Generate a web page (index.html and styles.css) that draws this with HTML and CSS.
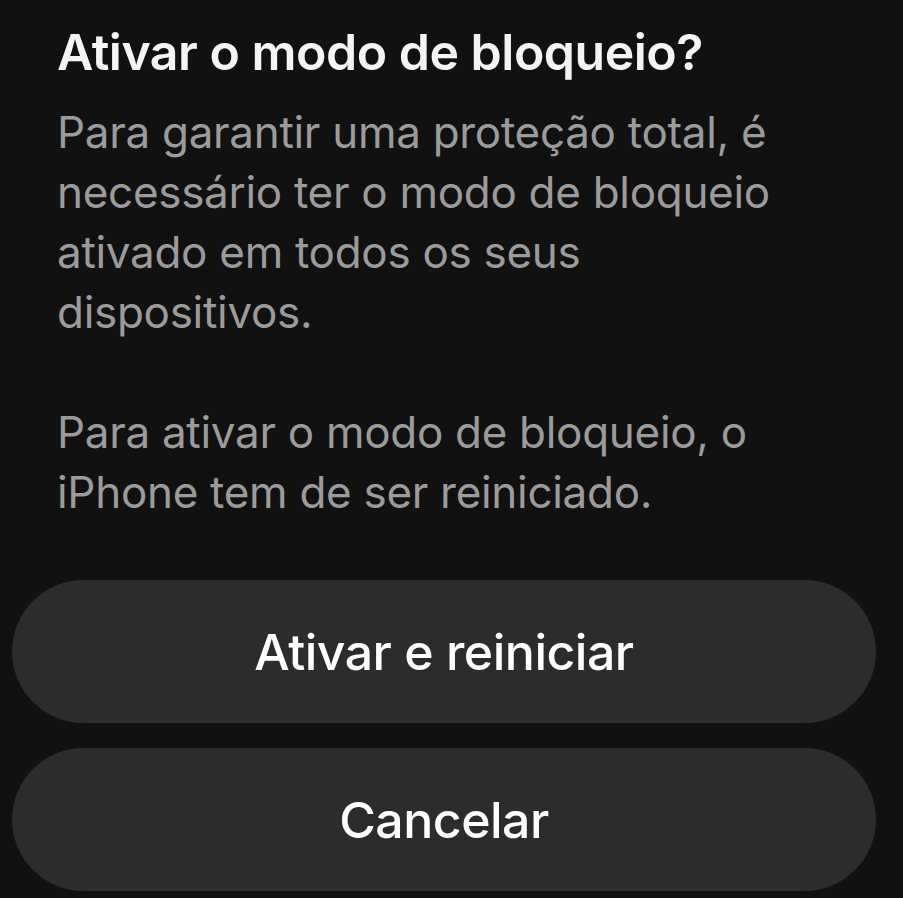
FILE: index.html
```html
<!DOCTYPE html>
<html lang="pt">
<head>
  <meta charset="UTF-8">
  <title>Modo de bloqueio</title>
  <link rel="stylesheet" href="styles.css">
</head>
<body>
  <div class="sheet">
    <div class="text">
      <h1>Ativar o modo de bloqueio?</h1>
      <p>Para garantir uma proteção total, é necessário ter o modo de bloqueio ativado em todos os seus dispositivos.</p>
      <p>Para ativar o modo de bloqueio, o iPhone tem de ser reiniciado.</p>
    </div>
    <div class="actions">
      <button class="btn">Ativar e reiniciar</button>
      <button class="btn">Cancelar</button>
    </div>
  </div>
</body>
</html>
```

FILE: styles.css
```css
* { box-sizing: border-box; margin: 0; padding: 0 }
html, body { height: 100% }
body {
  background: #111111;
  font-family: Inter, "Noto Sans", sans-serif;
  overflow: hidden;
}
.sheet {
  padding: 22px 27px 0 12px;
}
.text {
  padding-left: 45px;
  width: 805px;
}
.text h1 {
  color: #f4f4f4;
  font-size: 50px;
  font-weight: 600;
  line-height: 60px;
  letter-spacing: -0.5px;
  margin-bottom: 20px;
}
.text p {
  color: #9b9b9b;
  font-size: 44px;
  line-height: 60px;
  letter-spacing: -0.3px;
}
.text p + p {
  margin-top: 60px;
}
.actions {
  display: flex;
  flex-direction: column;
  gap: 25px;
  margin-top: 58px;
}
.btn {
  height: 143px;
  border: none;
  border-radius: 72px;
  background: #2c2c2c;
  color: #ffffff;
  font-family: inherit;
  font-size: 50px;
  font-weight: 500;
  letter-spacing: -0.5px;
}
```
